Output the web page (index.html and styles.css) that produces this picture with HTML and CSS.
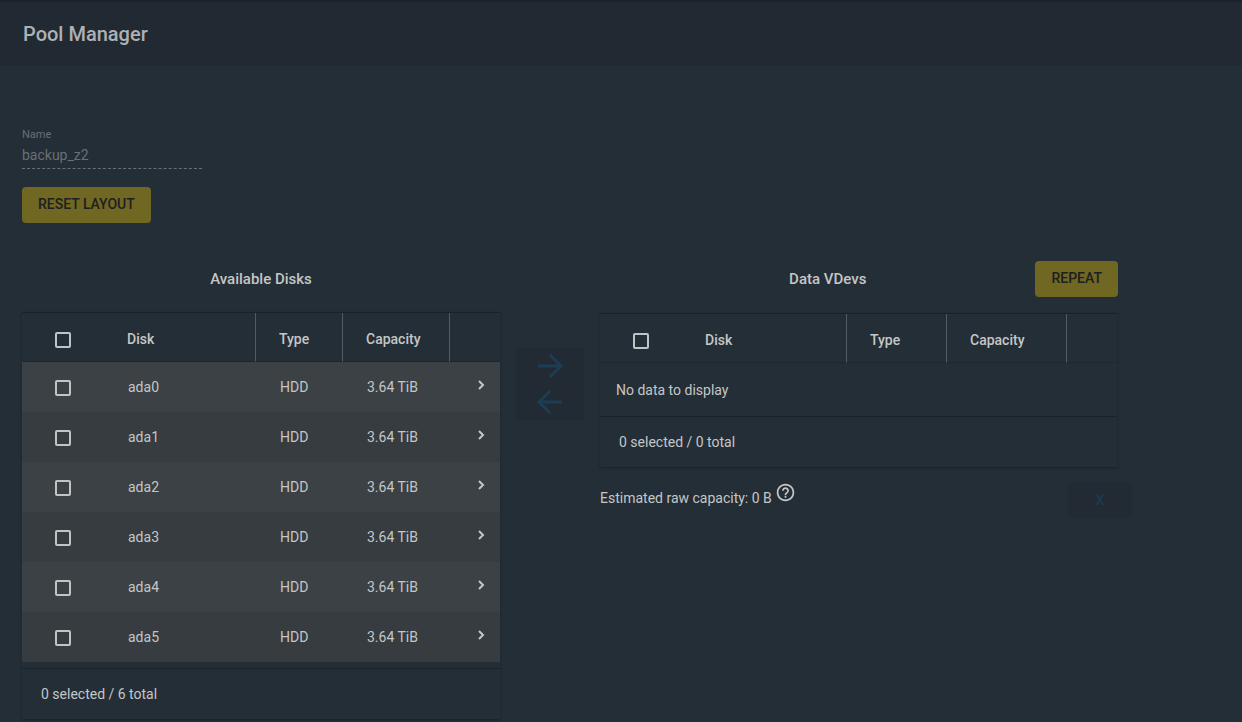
FILE: index.html
```html
<!DOCTYPE html>
<html lang="en">
<head>
    <meta charset="UTF-8">
    <meta name="viewport" content="width=device-width, initial-scale=1.0">
    <title>Pool Manager</title>
    <link rel="stylesheet" href="styles.css">
    <script src="script.js" defer></script>
</head>
<body>
    <header class="page-header">
        <h1>Pool Manager</h1>
    </header>

    <main>
        <div class="field">
            <label for="poolName">Name</label>
            <input type="text" id="poolName" value="backup_z2" disabled>
        </div>
        <button class="btn" type="button">RESET LAYOUT</button>

        <div class="layout">
            <section>
                <div class="section-title">
                    <h2>Available Disks</h2>
                </div>
                <div class="card">
                    <table class="disks available">
                        <thead>
                            <tr>
                                <th class="col-check"><input type="checkbox" aria-label="Select all disks"></th>
                                <th class="col-disk">Disk</th>
                                <th class="col-type">Type</th>
                                <th class="col-capacity">Capacity</th>
                                <th class="col-more"></th>
                            </tr>
                        </thead>
                        <tbody id="diskRows"></tbody>
                    </table>
                    <p class="table-footer">0 selected / 6 total</p>
                </div>
            </section>

            <div class="movers">
                <button type="button" aria-label="Add to vdev" disabled>
                    <svg viewBox="0 0 26 24"><path d="M1 12H24M13 1L24 12L13 23"/></svg>
                </button>
                <button type="button" aria-label="Remove from vdev" disabled>
                    <svg viewBox="0 0 26 24"><path d="M25 12H2M13 1L2 12L13 23"/></svg>
                </button>
            </div>

            <section>
                <div class="section-title with-action">
                    <h2>Data VDevs</h2>
                    <button class="btn" type="button">REPEAT</button>
                </div>
                <div class="card vdev-card">
                    <table class="disks vdevs">
                        <thead>
                            <tr>
                                <th class="col-check"><input type="checkbox" aria-label="Select all vdev disks"></th>
                                <th class="col-disk">Disk</th>
                                <th class="col-type">Type</th>
                                <th class="col-capacity">Capacity</th>
                                <th class="col-more"></th>
                            </tr>
                        </thead>
                        <tbody>
                            <tr>
                                <td class="empty" colspan="5">No data to display</td>
                            </tr>
                        </tbody>
                    </table>
                    <p class="table-footer">0 selected / 0 total</p>
                </div>
                <div class="vdev-info">
                    <span>Estimated raw capacity: 0 B</span>
                    <svg class="help" viewBox="0 0 24 24"><path d="M11 18h2v-2h-2v2zm1-16C6.480 2 2 6.480 2 12s4.480 10 10 10 10-4.480 10-10S17.520 2 12 2zm0 18c-4.410 0-8-3.590-8-8s3.590-8 8-8 8 3.590 8 8-3.590 8-8 8zm0-14c-2.210 0-4 1.790-4 4h2c0-1.100.9-2 2-2s2 .9 2 2c0 2-3 1.750-3 5h2c0-2.250 3-2.500 3-5 0-2.210-1.790-4-4-4z"/></svg>
                    <button class="remove-vdev" type="button" disabled>X</button>
                </div>
            </section>
        </div>
    </main>
</body>
</html>
```

FILE: styles.css
```css
* {
    box-sizing: border-box;
}

body {
    margin: 0;
    min-height: 100vh;
    background-color: #242e36;
    color: #c4c6c7;
    font-family: Roboto, Arial, sans-serif;
    font-size: 14px;
}

h1, h2, p {
    margin: 0;
}

.page-header {
    height: 66px;
    padding: 20px 23px;
    border-top: 2px solid #1a232c;
    background-color: #212932;
}

.page-header h1 {
    font-size: 20px;
    font-weight: 500;
    line-height: 24px;
    color: #aeb1b4;
}

main {
    padding: 63px 22px 0;
}

.field {
    width: 180px;
    margin-bottom: 18px;
}

.field label {
    display: block;
    font-size: 11px;
    line-height: 12px;
    color: #686f75;
}

.field input {
    display: block;
    width: 100%;
    height: 28px;
    padding: 0;
    border: 0;
    border-bottom: 1px dashed #687076;
    background: none;
    color: #697076;
    font: inherit;
}

.btn {
    height: 36px;
    padding: 0 16px 2px;
    border: 0;
    border-radius: 4px;
    background-color: #6f6722;
    color: #1d2020;
    font: inherit;
    font-weight: 500;
    cursor: pointer;
}

.layout {
    display: grid;
    grid-template-columns: 478fr 68fr 518fr 86fr;
    column-gap: 16px;
    align-items: start;
    margin-top: 38px;
}

.section-title {
    display: flex;
    align-items: center;
    height: 36px;
    margin-bottom: 15px;
}

.section-title h2 {
    flex: 1;
    font-size: 15px;
    font-weight: 500;
    text-align: center;
}

.with-action h2 {
    padding-left: 20px;
}

.card {
    border-top: 1px solid #18222a;
    box-shadow: 0 1px 2px 0 #18222a;
}

.vdev-card {
    margin: 16px 1px 0 0;
}

.disks {
    width: 100%;
    table-layout: fixed;
    border-collapse: separate;
    border-spacing: 0;
    text-align: left;
}

.disks th {
    height: 49px;
    padding: 4px 0 0 23px;
    border-bottom: 1px solid #1e272f;
    font-weight: 500;
}

.disks td {
    height: 50px;
    padding: 0 0 0 25px;
}

.disks .col-check {
    width: 81px;
    padding-left: 33px;
}

.disks .col-disk {
    padding-left: 24px;
}

.disks .col-more {
    width: 51px;
}

.available .col-type {
    width: 87px;
}

.available .col-capacity {
    width: 107px;
}

.vdevs .col-type {
    width: 100px;
}

.vdevs .col-capacity {
    width: 120px;
}

/* column dividers, header only */
th.col-type,
th.col-capacity,
th.col-more {
    border-left: 1px solid #515b62;
}

.available tbody tr {
    background-color: #363c40;
}

.available tbody tr:nth-child(odd) {
    background-color: #3b4145;
}

.disks input {
    appearance: none;
    display: block;
    width: 16px;
    height: 16px;
    margin: 2px 0 0;
    border: 2px solid #c0c4c5;
    border-radius: 2px;
}

.disks td.col-more {
    padding: 0 15px 4px 0;
}

.chevron {
    display: block;
    width: 8px;
    height: 10px;
    margin-left: auto;
    fill: none;
    stroke: #c4c6c7;
    stroke-width: 2;
}

.disks td.empty {
    height: 53px;
    padding-left: 16px;
}

.table-footer {
    height: 51px;
    padding: 0 19px;
    border-top: 1px solid #18222a;
    line-height: 50px;
}

.available + .table-footer {
    margin-top: 6px;
}

.movers {
    margin-top: 87px;
    background-color: #222b33;
}

.movers button {
    display: block;
    width: 100%;
    height: 36px;
    padding: 0;
    border: 0;
    background: none;
}

.movers svg {
    display: block;
    width: 26px;
    height: 24px;
    margin: 0 auto;
    fill: none;
    stroke: #1c3d54;
    stroke-width: 3;
}

.vdev-info {
    display: flex;
    align-items: flex-start;
    margin: 15px -14px 0 0;
    line-height: 32px;
}

.help {
    width: 21px;
    height: 21px;
    margin-left: 3px;
    fill: #c4c6c7;
}

.remove-vdev {
    width: 64px;
    height: 36px;
    margin-left: auto;
    border: 0;
    border-radius: 4px;
    background-color: #222b33;
    color: #1c3b52;
    font: inherit;
    font-weight: 500;
}
```

FILE: script.js
```js
const disks = ['ada0', 'ada1', 'ada2', 'ada3', 'ada4', 'ada5'];

document.querySelector('#diskRows').innerHTML = disks.map(disk => `
    <tr>
        <td class="col-check"><input type="checkbox" aria-label="Select ${disk}"></td>
        <td>${disk}</td>
        <td>HDD</td>
        <td>3.64 TiB</td>
        <td class="col-more"><svg class="chevron" viewBox="0 0 8 10"><path d="M2 1L6 5L2 9"/></svg></td>
    </tr>
`).join('');
```
